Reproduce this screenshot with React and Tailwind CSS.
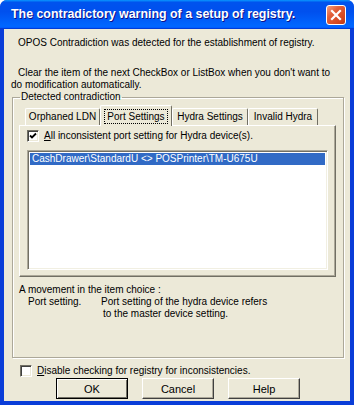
import React from 'react';

const font = "font-['Liberation_Sans',Arial,sans-serif]";

const CheckBox = ({ checked }) => (
    <div className="w-[12px] h-[12px] shrink-0 bg-white border border-t-[#716f64] border-l-[#716f64] border-b-white border-r-white shadow-[inset_1px_1px_0_#404040,inset_-1px_-1px_0_#ece9d8] flex items-center justify-center">
        {checked && (
            <svg width="8" height="8" viewBox="0 0 8 8">
                <path d="M1 3.5 L3 5.5 L7 1.5" stroke="#000" strokeWidth="1.8" fill="none" />
            </svg>
        )}
    </div>
);

const Tab = ({ label, width, selected }) => (
    <div
        className={
            selected
                ? `${width} h-[21px] -mb-px relative z-10 bg-[#ece9d8] border-t border-l border-white border-r border-r-[#716f64] rounded-t-[2px] flex items-center justify-center`
                : `${width} h-[17px] bg-[#ece9d8] border-t border-l border-white border-r border-r-[#716f64] rounded-t-[2px] flex items-center justify-center`
        }
    >
        {selected ? (
            <span className="px-[2px] leading-[13px] outline outline-1 outline-dotted outline-black">{label}</span>
        ) : (
            <span>{label}</span>
        )}
    </div>
);

const Button = ({ label, isDefault }) => (
    <button
        className={
            isDefault
                ? 'w-[72px] h-[21px] bg-[#ece9d8] border border-black shadow-[inset_1px_1px_0_#fff,inset_-1px_-1px_0_#716f64] text-[11px]'
                : 'w-[72px] h-[21px] bg-[#ece9d8] border border-t-white border-l-white border-b-[#404040] border-r-[#404040] shadow-[inset_-1px_-1px_0_#aca899] text-[11px]'
        }
    >
        {label}
    </button>
);

export default function App() {
    return (
        <div className={`w-[354px] h-[405px] flex flex-col bg-[#0a3dd8] rounded-t-[7px] overflow-hidden text-black ${font}`}>
            {/* Title bar */}
            <div className="h-[29px] shrink-0 flex items-center justify-between pl-[11px] pr-[8px] bg-[linear-gradient(180deg,#0997ff,#0053ee_8%,#0050ee_40%,#06f_88%,#06f_93%,#005bff_95%,#003dd7_96%,#003dd7)]">
                <span className="text-white font-bold text-[12.4px] [text-shadow:1px_1px_0_#0f1089]">
                    The contradictory warning of a setup of registry.
                </span>
                <div className="w-[20px] h-[20px] rounded-[3px] border border-white bg-[linear-gradient(135deg,#f4a07e,#e2603a_35%,#d2451e_80%,#b93a16)] flex items-center justify-center">
                    <svg width="12" height="12" viewBox="0 0 12 12">
                        <path d="M2 2 L10 10 M10 2 L2 10" stroke="#fff" strokeWidth="2.2" strokeLinecap="square" />
                    </svg>
                </div>
            </div>

            {/* Client area */}
            <div className="flex-1 mx-[4px] mb-[4px] bg-[#ece9d8] flex flex-col text-[10px] leading-[12px]">
                <p className="pt-[8px] pl-[7px] indent-[7px] whitespace-nowrap">
                    OPOS Contradiction was detected for the establishment of registry.
                </p>
                <p className="mt-[18px] pl-[7px] whitespace-nowrap">
                    <span className="pl-[7px]">Clear the item of the next CheckBox or ListBox when you don't want to</span>
                    <br />
                    do modification automatically.
                </p>

                <fieldset className="ml-[8px] mr-[6px] h-[267px] border border-[#aca899] shadow-[inset_1px_1px_0_#fff,1px_1px_0_#fff]">
                    <legend className="ml-[7px] px-[1px] leading-[12px]">Detected contradiction</legend>

                    <div className="ml-[6px] mr-[7px] mt-[2px] flex flex-col">
                        <div className="pl-[6px] flex items-end">
                            <Tab label="Orphaned LDN" width="w-[75px]" />
                            <Tab label="Port Settings" width="w-[72px]" selected />
                            <Tab label="Hydra Settings" width="w-[76px]" />
                            <Tab label="Invalid Hydra" width="w-[70px]" />
                        </div>
                        <div className="h-[152px] border border-t-white border-l-white border-b-[#716f64] border-r-[#716f64] shadow-[inset_-1px_-1px_0_#aca899] px-[7px] pt-[4px] flex flex-col">
                            <div className="flex items-center gap-[5px] h-[12px]">
                                <CheckBox checked />
                                <span className="whitespace-nowrap">
                                    <span className="underline">A</span>ll inconsistent port setting for Hydra device(s).
                                </span>
                            </div>
                            <div className="mt-[8px] h-[120px] bg-white border border-t-[#aca899] border-l-[#aca899] border-b-white border-r-white shadow-[inset_1px_1px_0_#716f64,inset_-1px_-1px_0_#f1efe2] p-[2px]">
                                <div className="h-[12px] bg-[#316ac5] text-white pl-[2px] whitespace-nowrap">
                                    CashDrawer\StandardU &lt;&gt; POSPrinter\TM-U675U
                                </div>
                            </div>
                        </div>

                        <div className="mt-[7px] whitespace-nowrap">
                            <p>A movement in the item choice :</p>
                            <div className="flex">
                                <span className="pl-[9px] w-[82px]">Port setting.</span>
                                <span>
                                    Port setting of the hydra device refers
                                    <br />
                                    <span className="pl-[2px]">to the master device setting.</span>
                                </span>
                            </div>
                        </div>
                    </div>
                </fieldset>

                <div className="mt-[6px] ml-[16px] flex items-center gap-[5px] h-[13px]">
                    <CheckBox />
                    <span className="whitespace-nowrap">
                        <span className="underline">D</span>isable checking for registry for inconsistencies.
                    </span>
                </div>

                <div className="mt-[1px] ml-[52px] flex gap-[14px]">
                    <Button label="OK" isDefault />
                    <Button label="Cancel" />
                    <Button label="Help" />
                </div>
            </div>
        </div>
    );
}
